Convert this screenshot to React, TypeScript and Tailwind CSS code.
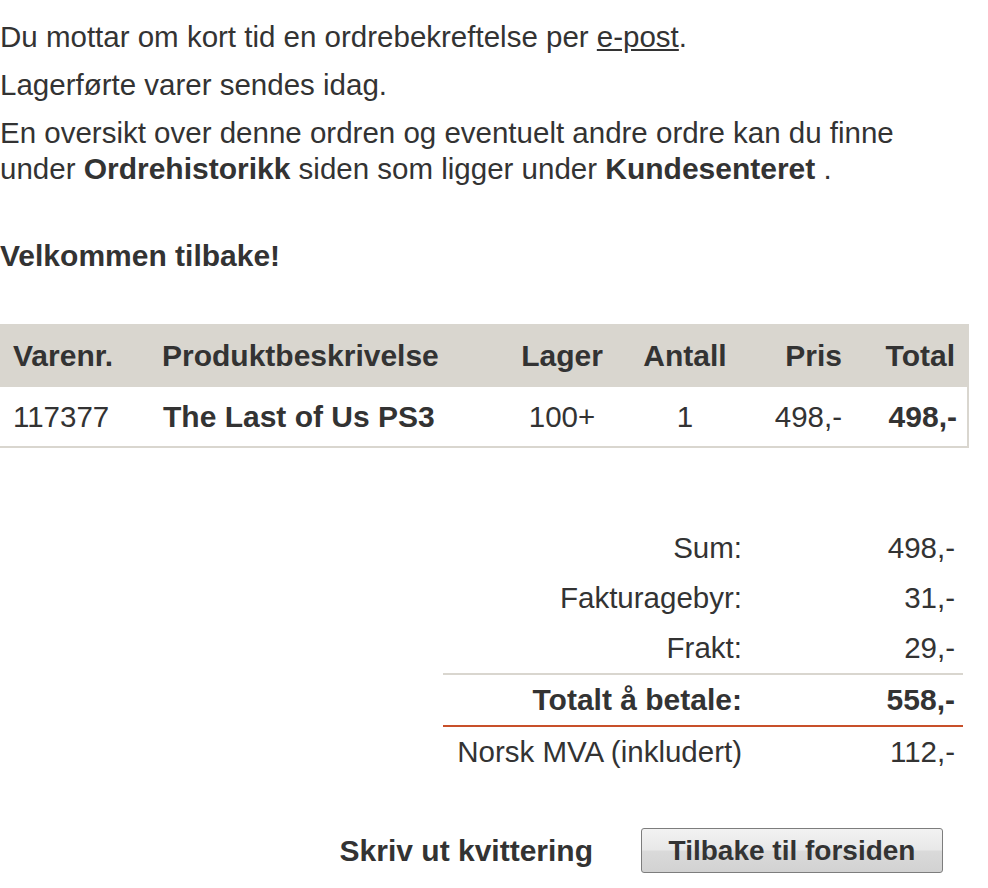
import React from 'react';

const cols = 'grid grid-cols-[150px_340px_144px_102px_119px_113px] items-center';

const App: React.FC = () => {
  return (
    <div className="min-h-screen bg-white font-['Liberation_Sans',Arial,sans-serif] text-[29.5px] leading-[36px] text-[#333333]">
      {/* Confirmation text */}
      <div className="pt-[19px]">
        <p className="mb-[12px]">
          Du mottar om kort tid en ordrebekreftelse per{' '}
          <a href="#" className="underline">
            e-post
          </a>
          .
        </p>
        <p className="mb-[12px]">Lagerførte varer sendes idag.</p>
        <p>
          En oversikt over denne ordren og eventuelt andre ordre kan du finne
          <br />
          under <b className="text-[30px]">Ordrehistorikk</b> siden som ligger under{' '}
          <b className="text-[30px]">Kundesenteret</b> .
        </p>
      </div>

      <h2 className="mt-[51px] text-[30px] font-bold">Velkommen tilbake!</h2>

      {/* Order lines */}
      <div className="mt-[50px] w-[969px]">
        <div className={`${cols} h-[63px] bg-[#d9d6cf] text-[30px] font-bold`}>
          <div className="pl-[13px]">Varenr.</div>
          <div className="pl-[12px]">Produktbeskrivelse</div>
          <div className="text-center">Lager</div>
          <div className="text-center">Antall</div>
          <div className="pr-[13px] text-right">Pris</div>
          <div className="pr-[13px] text-right">Total</div>
        </div>
        <div className={`${cols} h-[61px] border-r-2 border-b-2 border-[#d9d6cf]`}>
          <div className="pl-[13px]">117377</div>
          <div className="pl-[13px] text-[30px] font-bold">The Last of Us PS3</div>
          <div className="text-center">100+</div>
          <div className="text-center">1</div>
          <div className="pr-[13px] text-right">498,-</div>
          <div className="pr-[11px] text-right text-[30px] font-bold">498,-</div>
        </div>
      </div>

      {/* Totals */}
      <div className="mt-[75px] ml-[443px] w-[520px]">
        <div className="grid grid-cols-[299px_1fr] items-center">
          <div className="h-[50px] leading-[50px] text-right">Sum:</div>
          <div className="h-[50px] leading-[50px] pr-[8px] text-right">498,-</div>
          <div className="h-[50px] leading-[50px] text-right">Fakturagebyr:</div>
          <div className="h-[50px] leading-[50px] pr-[8px] text-right">31,-</div>
          <div className="h-[50px] leading-[50px] text-right">Frakt:</div>
          <div className="h-[50px] leading-[50px] pr-[8px] text-right">29,-</div>
        </div>
        <div className="grid grid-cols-[299px_1fr] items-center border-y-2 border-t-[#d9d6cf] border-b-[#c8502a] text-[30px] font-bold">
          <div className="h-[50px] leading-[50px] text-right">Totalt å betale:</div>
          <div className="h-[50px] leading-[50px] pr-[8px] text-right">558,-</div>
        </div>
        <div className="grid grid-cols-[299px_1fr] items-center">
          <div className="h-[50px] leading-[50px] text-right">Norsk MVA (inkludert)</div>
          <div className="h-[50px] leading-[50px] pr-[8px] text-right">112,-</div>
        </div>
      </div>

      {/* Actions */}
      <div className="mt-[51px] flex items-center justify-end gap-[48px] pr-[45px]">
        <a href="#" className="text-[30px] font-bold">
          Skriv ut kvittering
        </a>
        <button className="h-[45px] w-[302px] rounded-[3px] border border-[#7d7d7d] bg-[linear-gradient(to_bottom,#f2f2f2_0%,#e8e8e8_48%,#dadada_52%,#d2d2d2_100%)] text-[28px] leading-[43px] font-bold text-[#333333]">
          Tilbake til forsiden
        </button>
      </div>
    </div>
  );
};

export default App;
